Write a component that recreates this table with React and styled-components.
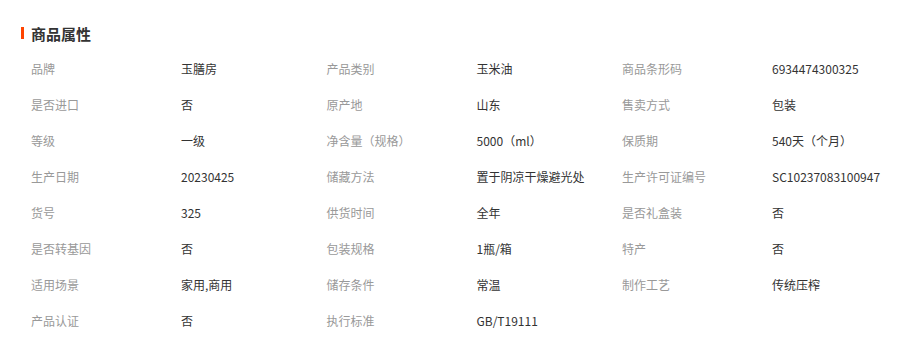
import React from 'react'
import styled, { createGlobalStyle } from 'styled-components'

const GlobalStyle = createGlobalStyle`
  body {
    margin: 0;
    background: #fff;
    font-family: "Noto Sans CJK SC", "Liberation Sans", sans-serif;
  }
`

const Panel = styled.section`
  width: 920px;
  height: 343px;
  padding: 23px 0 0 21px;
  box-sizing: border-box;
  background: #fff;
`

const Heading = styled.h3`
  display: flex;
  align-items: center;
  gap: 7px;
  margin: 0;
  height: 20px;
  font-size: 15px;
  font-weight: 700;
  color: #333;
`

const Bar = styled.span`
  width: 3px;
  height: 12px;
  background: #ff4400;
`

const Grid = styled.div`
  display: grid;
  grid-template-columns: repeat(3, 295.5px);
  grid-auto-rows: 36px;
  margin-top: 7px;
  padding-left: 10px;
`

const Item = styled.div`
  display: flex;
  align-items: center;
  font-size: 12px;
  font-family: "Noto Sans CJK SC", "Liberation Sans", sans-serif;
`

const Label = styled.span`
  width: 150px;
  flex-shrink: 0;
  color: #999;
`

const Value = styled.span`
  color: #333;
  white-space: nowrap;
`

const attrs = [
  ['品牌', '玉膳房'],
  ['产品类别', '玉米油'],
  ['商品条形码', '6934474300325'],
  ['是否进口', '否'],
  ['原产地', '山东'],
  ['售卖方式', '包装'],
  ['等级', '一级'],
  ['净含量（规格）', '5000（ml）'],
  ['保质期', '540天（个月）'],
  ['生产日期', '20230425'],
  ['储藏方法', '置于阴凉干燥避光处'],
  ['生产许可证编号', 'SC10237083100947'],
  ['货号', '325'],
  ['供货时间', '全年'],
  ['是否礼盒装', '否'],
  ['是否转基因', '否'],
  ['包装规格', '1瓶/箱'],
  ['特产', '否'],
  ['适用场景', '家用,商用'],
  ['储存条件', '常温'],
  ['制作工艺', '传统压榨'],
  ['产品认证', '否'],
  ['执行标准', 'GB/T19111'],
]

const App = () =>
  <>
    <GlobalStyle />
    <Panel>
      <Heading>
        <Bar />
        商品属性
      </Heading>
      <Grid>
        {attrs.map(([label, value]) =>
          <Item key={label}>
            <Label>{label}</Label>
            <Value>{value}</Value>
          </Item>
        )}
      </Grid>
    </Panel>
  </>

export default App
